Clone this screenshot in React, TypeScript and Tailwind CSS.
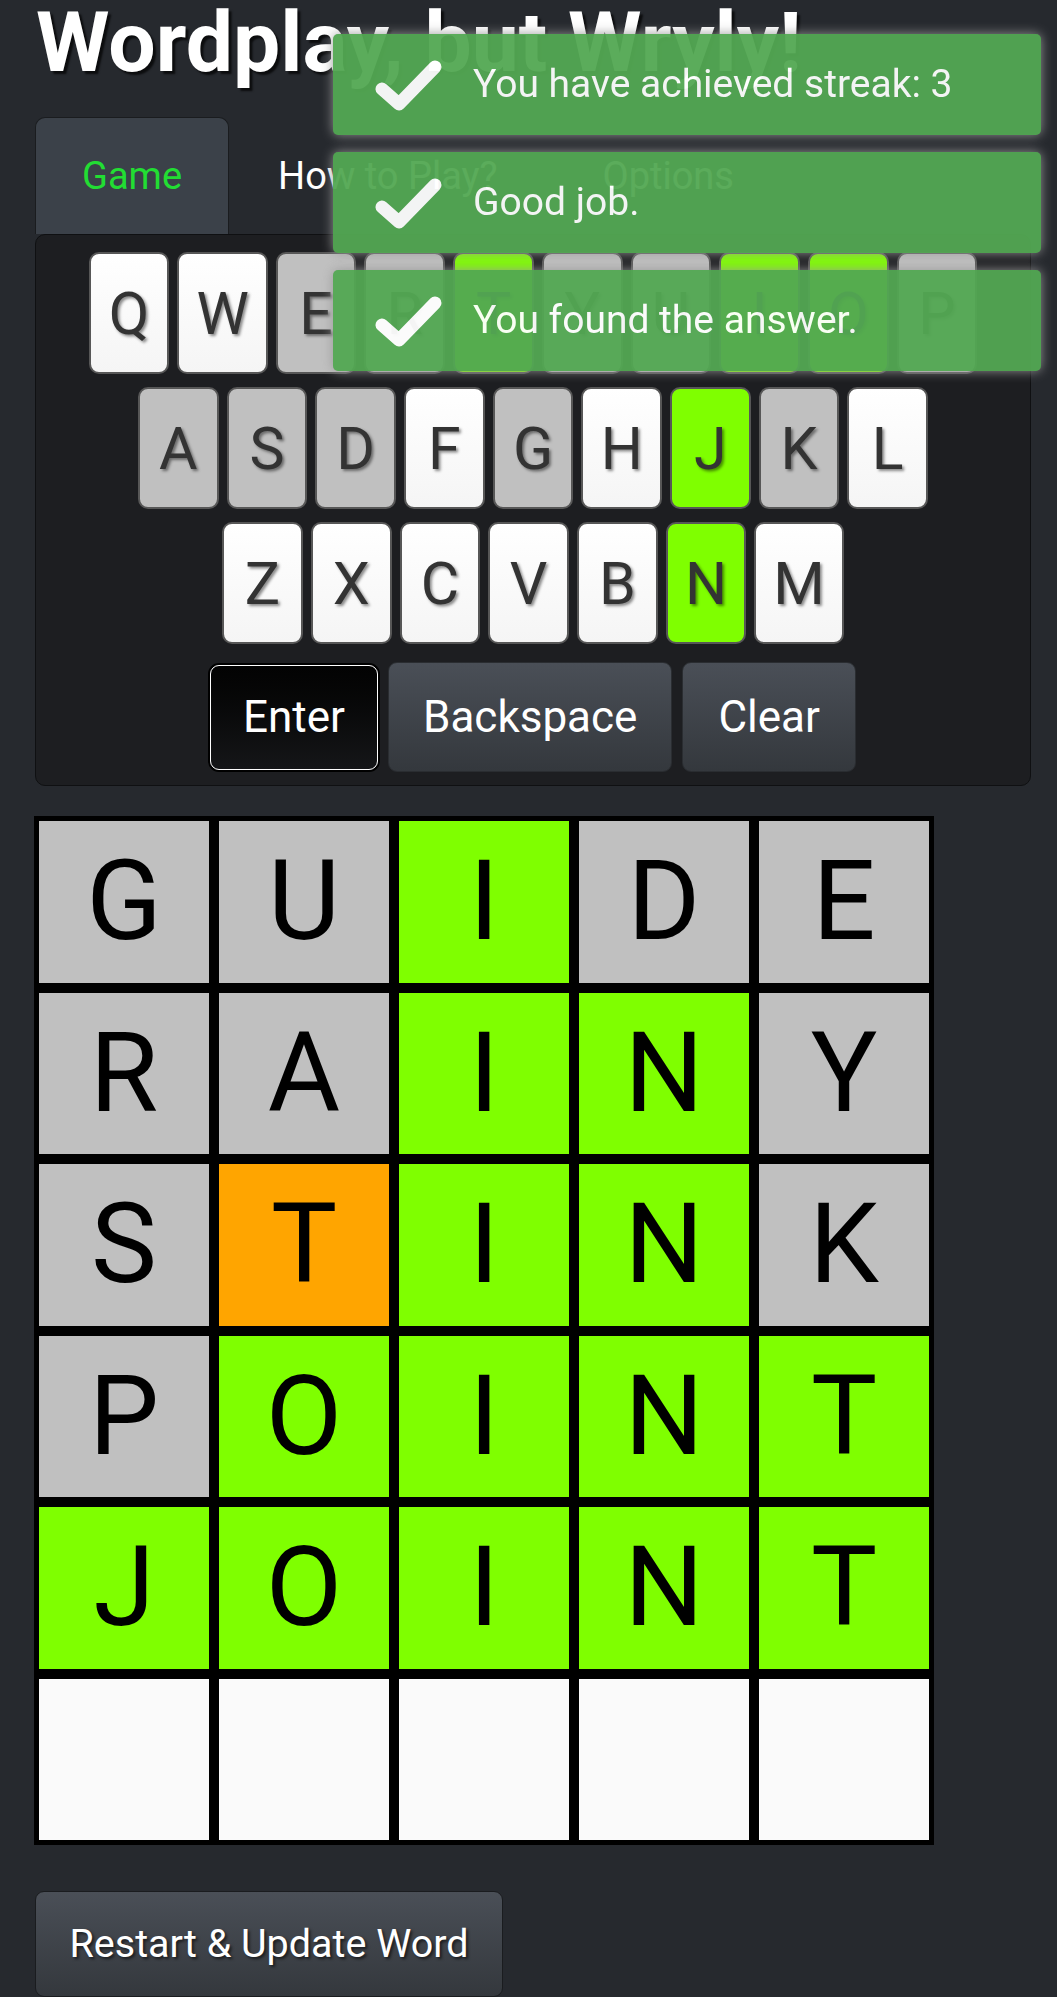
import React from "react";

type Shade = "w" | "g" | "G" | "o";

const keyBg: Record<Shade, string> = {
  w: "bg-linear-to-b from-[#ffffff] to-[#f5f5f5]",
  g: "bg-[#c0c0c0]",
  G: "bg-[#7fff00]",
  o: "bg-[#ffa500]",
};

const tileBg: Record<Shade, string> = {
  w: "bg-[#fafafa]",
  g: "bg-[#c0c0c0]",
  G: "bg-[#7fff00]",
  o: "bg-[#ffa500]",
};

const keyRows: [string, Shade][][] = [
  [["Q", "w"], ["W", "w"], ["E", "g"], ["R", "g"], ["T", "G"], ["Y", "g"], ["U", "g"], ["I", "G"], ["O", "G"], ["P", "g"]],
  [["A", "g"], ["S", "g"], ["D", "g"], ["F", "w"], ["G", "g"], ["H", "w"], ["J", "G"], ["K", "g"], ["L", "w"]],
  [["Z", "w"], ["X", "w"], ["C", "w"], ["V", "w"], ["B", "w"], ["N", "G"], ["M", "w"]],
];

const board: { word: string; marks: Shade[] }[] = [
  { word: "GUIDE", marks: ["g", "g", "G", "g", "g"] },
  { word: "RAINY", marks: ["g", "g", "G", "G", "g"] },
  { word: "STINK", marks: ["g", "o", "G", "G", "g"] },
  { word: "POINT", marks: ["g", "G", "G", "G", "G"] },
  { word: "JOINT", marks: ["G", "G", "G", "G", "G"] },
  { word: "     ", marks: ["w", "w", "w", "w", "w"] },
];

const toasts = ["You have achieved streak: 3", "Good job.", "You found the answer."];

const Key = ({ letter, shade }: { letter: string; shade: Shade }) => (
  <div
    className={`h-[122px] min-w-[80.7px] px-[17px] flex items-center justify-center border-2 border-[#575757] rounded-[10px] text-[59px] leading-none text-[#333] [text-shadow:2px_2px_3px_rgba(0,0,0,0.45)] ${keyBg[shade]}`}
  >
    {letter}
  </div>
);

const Toast = ({ text }: { text: string }) => (
  <div className="relative h-[101px] rounded-[5px] bg-[#53a853] opacity-95 shadow-[0_0_12px_#999] flex items-center pl-[140px] text-[39px] text-white">
    <svg
      className="absolute left-0 top-0 blur-[0.6px]"
      width="140"
      height="101"
      viewBox="0 0 140 101"
    >
      <polyline
        points="49,55 66,70 102,33"
        fill="none"
        stroke="#ffffff"
        strokeWidth="13"
        strokeLinecap="round"
        strokeLinejoin="round"
      />
    </svg>
    {text}
  </div>
);

export default function App() {
  return (
    <div className="relative min-h-[1997px] overflow-hidden bg-[#26292e] font-[Roboto,sans-serif]">
      {/* Header */}
      <h1 className="pl-[36px] pt-[1px] text-[84px] font-bold leading-none text-white [text-shadow:3px_3px_2px_rgba(0,0,0,0.7)]">
        Wordplay, but Wryly!
      </h1>

      {/* Tabs */}
      <div className="mt-[32px] ml-[35px] flex text-[38px] leading-none">
        <div className="h-[117px] px-[46px] flex items-center rounded-t-[10px] border border-b-0 border-[#1a1c1f] bg-[#3b4149] text-[#22dd33]">
          Game
        </div>
        <div className="ml-[3px] h-[117px] px-[46px] flex items-center text-white">How to Play?</div>
        <div className="ml-[13px] h-[117px] px-[46px] flex items-center text-white">Options</div>
      </div>

      {/* Keyboard */}
      <section className="ml-[35px] w-[996px] rounded-[10px] border border-[#0f1012] bg-[#1d1e21] pt-[17px] pb-[13px] flex flex-col items-center gap-[13px]">
        {keyRows.map((row, i) => (
          <div key={i} className="flex justify-center gap-[8px]">
            {row.map(([l, s]) => (
              <Key key={l} letter={l} shade={s} />
            ))}
          </div>
        ))}
        <div className="mt-[5px] flex items-center justify-center gap-[10px] text-[44px] leading-none text-white [text-shadow:2px_2px_3px_rgba(0,0,0,0.6)]">
          <button className="h-[105px] px-[32px] rounded-[9px] border border-white bg-linear-to-b from-[#030303] to-[#151618] shadow-[0_0_0_2px_#000]">
            Enter
          </button>
          <button className="h-[110px] px-[34px] rounded-[9px] border border-[#2a2d31] bg-linear-to-b from-[#4a4f57] to-[#34383d]">
            Backspace
          </button>
          <button className="h-[110px] px-[35px] rounded-[9px] border border-[#2a2d31] bg-linear-to-b from-[#4a4f57] to-[#34383d]">
            Clear
          </button>
        </div>
      </section>

      {/* Board */}
      <div className="mt-[30px] ml-[34px] w-[900px] bg-black p-[5px] grid grid-cols-5 grid-rows-[repeat(6,161.5px)] gap-[10px]">
        {board.map((row, r) =>
          row.word.split("").map((ch, c) => (
            <div
              key={`${r}-${c}`}
              className={`flex items-center justify-center text-[111px] leading-none text-black ${tileBg[row.marks[c]]}`}
            >
              {ch.trim()}
            </div>
          ))
        )}
      </div>

      <button className="mt-[46px] ml-[35px] w-[468px] h-[106px] rounded-[9px] border border-[#1a1c1f] bg-linear-to-b from-[#4a4f57] to-[#34383d] text-[39.5px] leading-none text-white [text-shadow:2px_2px_3px_rgba(0,0,0,0.6)]">
        Restart &amp; Update Word
      </button>

      {/* Notifications */}
      <div className="absolute top-[34px] left-[333px] w-[708px] flex flex-col gap-[17px]">
        {toasts.map((t) => (
          <Toast key={t} text={t} />
        ))}
      </div>
    </div>
  );
}
